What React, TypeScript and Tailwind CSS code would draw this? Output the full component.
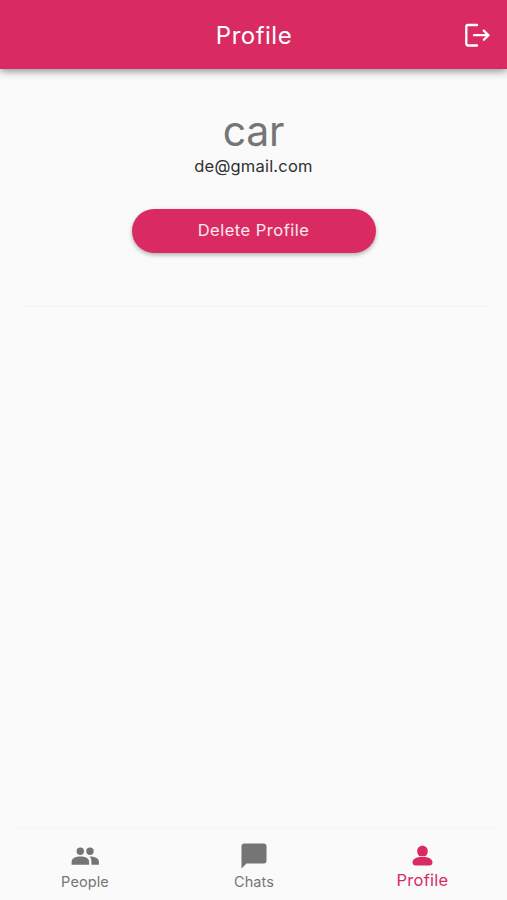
const PeopleIcon = () => (
  <svg viewBox="0 0 30 30" className="size-[30px]" fill="currentColor">
    <circle cx="10.300" cy="10.200" r="3.700" />
    <circle cx="20" cy="10.200" r="3.700" />
    <path d="M10.500 15.600c-4.800 0-8.900 1.900-8.900 5.200v2.900h17.500v-2.900c0-3.300-3.900-5.200-8.600-5.200z" />
    <path d="M19.500 15.600c1.200 1 1.900 2.700 1.900 4.700v3.400h7.500v-2.900c0-3.300-4.300-5.200-9.400-5.200z" />
  </svg>
)

const ChatIcon = () => (
  <svg viewBox="0 0 24 24" className="size-[30px]" fill="currentColor">
    <path d="M20 2H4c-1.100 0-2 .9-2 2v18l4-4h14c1.100 0 2-.9 2-2V4c0-1.100-.9-2-2-2z" />
  </svg>
)

const PersonIcon = () => (
  <svg viewBox="0 0 30 30" className="size-[30px]" fill="currentColor">
    <path d="M14.500 4.800c-3.100 0-5.300 2.300-5.300 5.200 0 2.100.8 4 2.100 4.900h6.400c1.300-.9 2.100-2.800 2.100-4.900 0-2.900-2.200-5.200-5.300-5.200z" />
    <path d="M14.500 15.700c-5.500 0-10 2.100-10 5.400 0 2.400 1.200 3.500 3.200 3.500h13.600c2 0 3.200-1.100 3.200-3.500 0-3.300-4.500-5.400-10-5.400z" />
  </svg>
)

const LogoutIcon = () => (
  <svg
    viewBox="0 0 28 28"
    className="size-7"
    fill="none"
    stroke="currentColor"
    strokeWidth="2.300"
    strokeLinecap="round"
    strokeLinejoin="round"
  >
    <path d="M14 4H5a1.700 1.700 0 0 0-1.700 1.700v17.100a1.700 1.700 0 0 0 1.700 1.700h9" />
    <path d="M11 14.200h14.500M20.800 9.600l4.700 4.600-4.700 4.600" />
  </svg>
)

const tabs = [
  { label: "People", icon: PeopleIcon, active: false },
  { label: "Chats", icon: ChatIcon, active: false },
  { label: "Profile", icon: PersonIcon, active: true },
]

export default function App() {
  return (
    <div className="flex h-[900px] w-[507px] flex-col overflow-hidden bg-[#fafafa] font-['Inter',sans-serif]">
      <header className="grid h-[69px] shrink-0 grid-cols-[1fr_auto_1fr] items-center bg-[#d92b62] px-4 text-white shadow-[0_2px_8px_rgba(0,0,0,0.45)]">
        <span />
        <h1 className="pl-px pt-0.5 text-[24px] font-normal leading-8 tracking-[0.5px]">Profile</h1>
        <button className="justify-self-end" aria-label="Log out">
          <LogoutIcon />
        </button>
      </header>

      <main className="flex flex-1 flex-col items-center pt-[38px]">
        <h2 className="text-[41px] leading-[48px] tracking-[-0.3px] text-[#757575]">car</h2>
        <p className="-mt-px text-[16.500px] leading-6 tracking-[0.2px] text-[#303030]">de@gmail.com</p>
        <button className="mt-[31px] h-11 w-[244px] rounded-full bg-[#d92b62] pb-0.5 text-[16.500px] font-normal tracking-[0.5px] text-white/90 shadow-[0_2px_4px_rgba(0,0,0,0.3)]">
          Delete Profile
        </button>
        <hr className="ml-1 mt-[52px] w-[463px] border-t-2 border-[#f4f4f4]" />
      </main>

      <nav className="flex h-[72px] shrink-0 flex-col">
        <div className="ml-3.5 mr-2.5 h-px bg-[#f5f5f5]" />
        <div className="grid flex-1 grid-cols-3">
          {tabs.map(({ label, icon: Icon, active }) => (
            <button
              key={label}
              className={`flex flex-col items-center pt-3 ${active ? "text-[#d92b62]" : "text-[#757575]"}`}
            >
              <Icon />
              <span
                className={
                  active
                    ? "-mt-px text-[16.500px] leading-5 tracking-[0.25px]"
                    : "pl-px pt-px text-[14.500px] leading-5 tracking-[0.1px]"
                }
              >
                {label}
              </span>
            </button>
          ))}
        </div>
      </nav>
    </div>
  )
}
